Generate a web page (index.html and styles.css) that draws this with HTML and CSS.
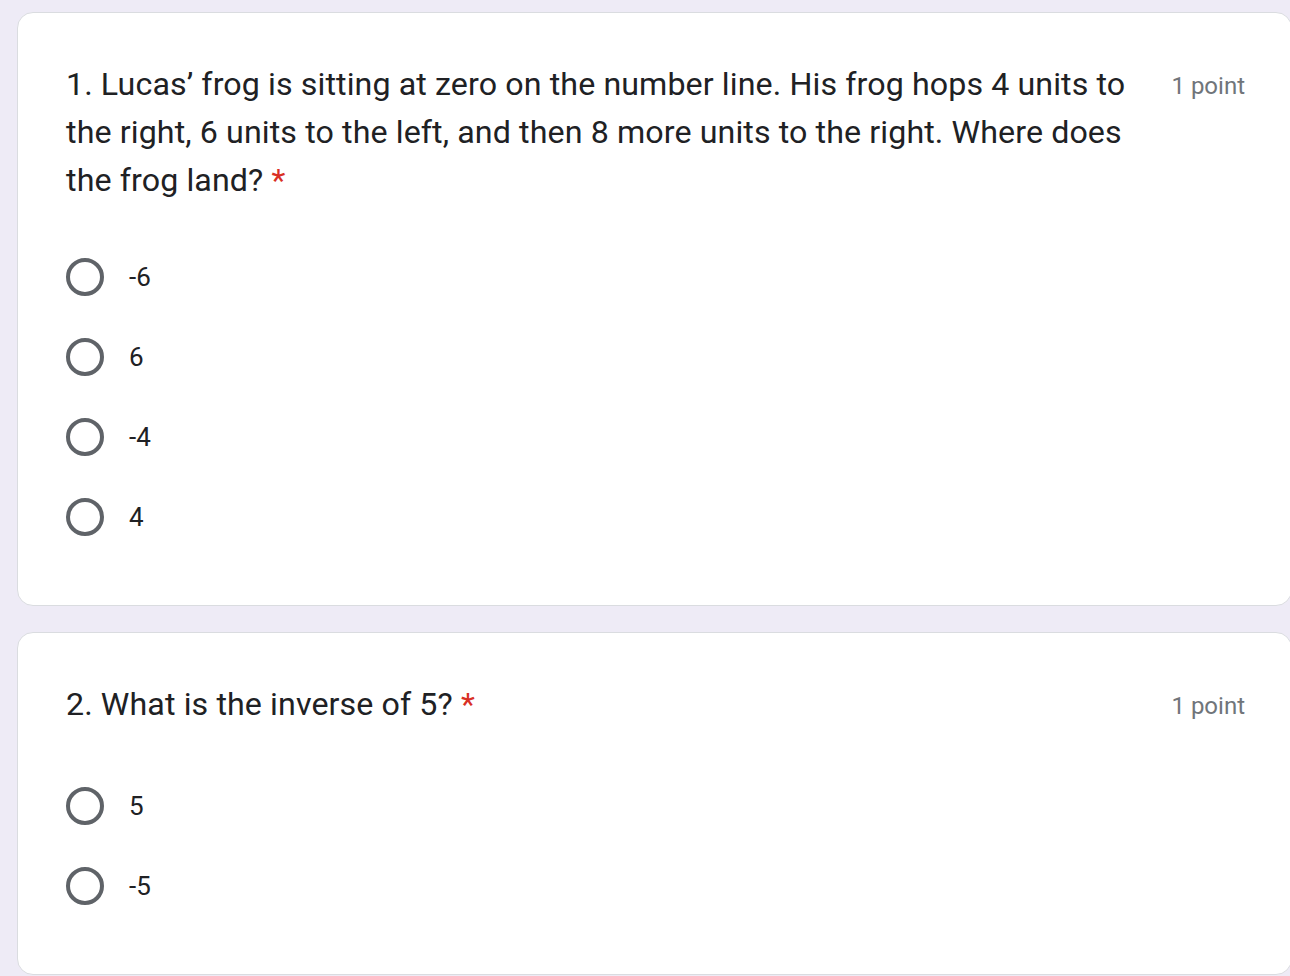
FILE: index.html
```html
<!DOCTYPE html>
<html>
<head>
<meta charset="utf-8">
<link rel="stylesheet" href="styles.css">
</head>
<body>
<div class="page">
  <section class="card">
    <div class="head">
      <div class="title">1. Lucas’ frog is sitting at zero on the number line. His frog hops 4 units to<br>the right, 6 units to the left, and then 8 more units to the right. Where does<br>the frog land? <span class="req">*</span></div>
      <div class="points">1 point</div>
    </div>
    <div class="options">
      <label class="opt"><span class="radio"></span><span class="otext">-6</span></label>
      <label class="opt"><span class="radio"></span><span class="otext">6</span></label>
      <label class="opt"><span class="radio"></span><span class="otext">-4</span></label>
      <label class="opt"><span class="radio"></span><span class="otext">4</span></label>
    </div>
  </section>
  <section class="card card2">
    <div class="head">
      <div class="title">2. What is the inverse of 5? <span class="req">*</span></div>
      <div class="points">1 point</div>
    </div>
    <div class="options options2">
      <label class="opt"><span class="radio"></span><span class="otext">5</span></label>
      <label class="opt"><span class="radio"></span><span class="otext">-5</span></label>
    </div>
  </section>
</div>
</body>
</html>
```

FILE: styles.css
```css
html, body {
  margin: 0;
  padding: 0;
  background: #eeebf6;
  overflow: hidden;
}
.page {
  width: 1290px;
  height: 976px;
  padding: 12px 0 0 17px;
  box-sizing: border-box;
  display: flex;
  flex-direction: column;
  gap: 26px;
}
.card {
  width: 1275px;
  background: #fff;
  border: 1px solid #dadce0;
  border-radius: 16px;
  padding: 47px 46px 48px 48px;
  box-sizing: border-box;
}
.head {
  display: flex;
  justify-content: space-between;
  align-items: flex-start;
}
.title {
  font-family: Roboto, "Open Sans", sans-serif;
  font-size: 32.2px;
  line-height: 48px;
  color: #202124;
  letter-spacing: 0.1px;
}
.req {
  color: #d93025;
}
.points {
  font-family: Roboto, sans-serif;
  font-size: 24px;
  line-height: 48px;
  color: #70757a;
  padding-top: 2px;
  white-space: nowrap;
}
.options {
  margin-top: 33px;
  display: flex;
  flex-direction: column;
}
.options2 {
  margin-top: 36px;
}
.opt {
  height: 80px;
  display: flex;
  align-items: center;
}
.radio {
  width: 38px;
  height: 38px;
  border: 4px solid #5f6368;
  border-radius: 50%;
  box-sizing: border-box;
  flex: none;
}
.otext {
  font-family: Roboto, sans-serif;
  font-size: 26px;
  color: #202124;
  margin-left: 25px;
}
```
